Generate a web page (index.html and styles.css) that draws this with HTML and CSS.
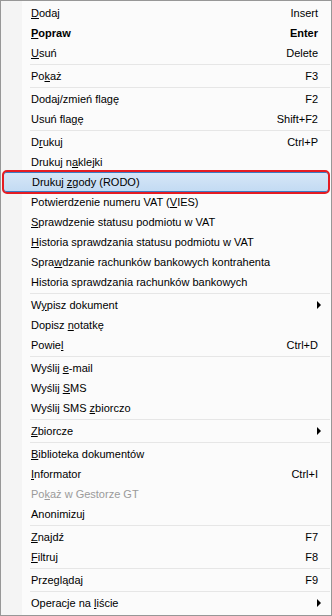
FILE: index.html
```html
<!DOCTYPE html>
<html lang="pl">
<head>
  <meta charset="UTF-8" />
  <title>Menu kontekstowe</title>
  <link rel="stylesheet" href="styles.css">
</head>
<body>
  <ul class="menu">
    <li class="item"><span class="label"><u>D</u>odaj</span><span class="key">Insert</span></li>
    <li class="item bold"><span class="label"><u>P</u>opraw</span><span class="key">Enter</span></li>
    <li class="item"><span class="label"><u>U</u>suń</span><span class="key">Delete</span></li>
    <li class="sep"></li>
    <li class="item"><span class="label">Po<u>k</u>aż</span><span class="key">F3</span></li>
    <li class="sep"></li>
    <li class="item"><span class="label">Dodaj/zmień fla<u>g</u>ę</span><span class="key">F2</span></li>
    <li class="item"><span class="label">Usuń fla<u>g</u>ę</span><span class="key">Shift+F2</span></li>
    <li class="sep"></li>
    <li class="item"><span class="label">D<u>r</u>ukuj</span><span class="key">Ctrl+P</span></li>
    <li class="item"><span class="label">Drukuj n<u>a</u>klejki</span></li>
    <li class="item hot"><span class="label">Drukuj <u>z</u>gody (RODO)</span></li>
    <li class="item"><span class="label">Potwierdzenie numeru VAT (<u>V</u>IES)</span></li>
    <li class="item"><span class="label"><u>S</u>prawdzenie statusu podmiotu w VAT</span></li>
    <li class="item"><span class="label"><u>H</u>istoria sprawdzania statusu podmiotu w VAT</span></li>
    <li class="item"><span class="label">Spra<u>w</u>dzanie rachunków bankowych kontrahenta</span></li>
    <li class="item"><span class="label">Historia sprawdzania rachunków bankowych</span></li>
    <li class="sep"></li>
    <li class="item"><span class="label">W<u>y</u>pisz dokument</span><span class="key"><i class="arrow"></i></span></li>
    <li class="item"><span class="label">Dopisz <u>n</u>otatkę</span></li>
    <li class="item"><span class="label">Powie<u>l</u></span><span class="key">Ctrl+D</span></li>
    <li class="sep"></li>
    <li class="item"><span class="label">Wyślij <u>e</u>-mail</span></li>
    <li class="item"><span class="label">Wyślij <u>S</u>MS</span></li>
    <li class="item"><span class="label">Wyślij SMS <u>z</u>biorczo</span></li>
    <li class="sep"></li>
    <li class="item"><span class="label"><u>Z</u>biorcze</span><span class="key"><i class="arrow"></i></span></li>
    <li class="sep"></li>
    <li class="item"><span class="label"><u>B</u>iblioteka dokumentów</span></li>
    <li class="item"><span class="label"><u>I</u>nformator</span><span class="key">Ctrl+I</span></li>
    <li class="item disabled"><span class="label">Po<u>k</u>aż w Gestorze GT</span></li>
    <li class="item"><span class="label">Anonimizuj</span></li>
    <li class="sep"></li>
    <li class="item"><span class="label"><u>Z</u>najdź</span><span class="key">F7</span></li>
    <li class="item"><span class="label"><u>F</u>iltruj</span><span class="key">F8</span></li>
    <li class="sep"></li>
    <li class="item"><span class="label">Przeglądaj</span><span class="key">F9</span></li>
    <li class="sep"></li>
    <li class="item"><span class="label">Operacje na <u>l</u>iście</span><span class="key"><i class="arrow"></i></span></li>
  </ul>
</body>
</html>
```

FILE: styles.css
```css
body {
  margin: 0;
  background: #fff;
  font-family: "Liberation Sans", Arial, sans-serif;
  font-size: 11px;
  color: #000;
}
.menu {
  list-style: none;
  box-sizing: border-box;
  width: 332px;
  height: 616px;
  margin: 0;
  padding: 2px 1px;
  border: 1px solid #979797;
  background: linear-gradient(to right, #f4f4f4 21px, #fbfbfb 21px);
}
.item {
  position: relative;
  display: flex;
  align-items: center;
  height: 20px;
  padding: 0 12px 0 29px;
  white-space: nowrap;
}
.label {
  flex: 1;
}
.key {
  display: flex;
  align-items: center;
}
.bold {
  font-weight: bold;
}
.disabled {
  color: #9a9a9a;
}
u {
  text-underline-offset: 1px;
}
.arrow {
  display: block;
  width: 0;
  height: 0;
  margin-right: -3px;
  border-left: 4px solid #000;
  border-top: 4px solid transparent;
  border-bottom: 4px solid transparent;
}
.sep {
  height: 3px;
  margin-left: 28px;
  background: linear-gradient(#fbfbfb 1px, #e6e6e6 1px, #e6e6e6 2px, #fbfbfb 2px);
}
.hot {
  box-sizing: border-box;
  margin: 0 1px;
  padding-left: 28px;
  border: 1px solid #3d7bc2;
  border-radius: 3px;
  background: linear-gradient(#d6e6f7, #c3dbf3);
}
.hot::after {
  content: "";
  position: absolute;
  top: -3px;
  bottom: -3px;
  left: -2px;
  right: -2px;
  border: 2px solid #e51c23;
  border-radius: 5px;
}
```
